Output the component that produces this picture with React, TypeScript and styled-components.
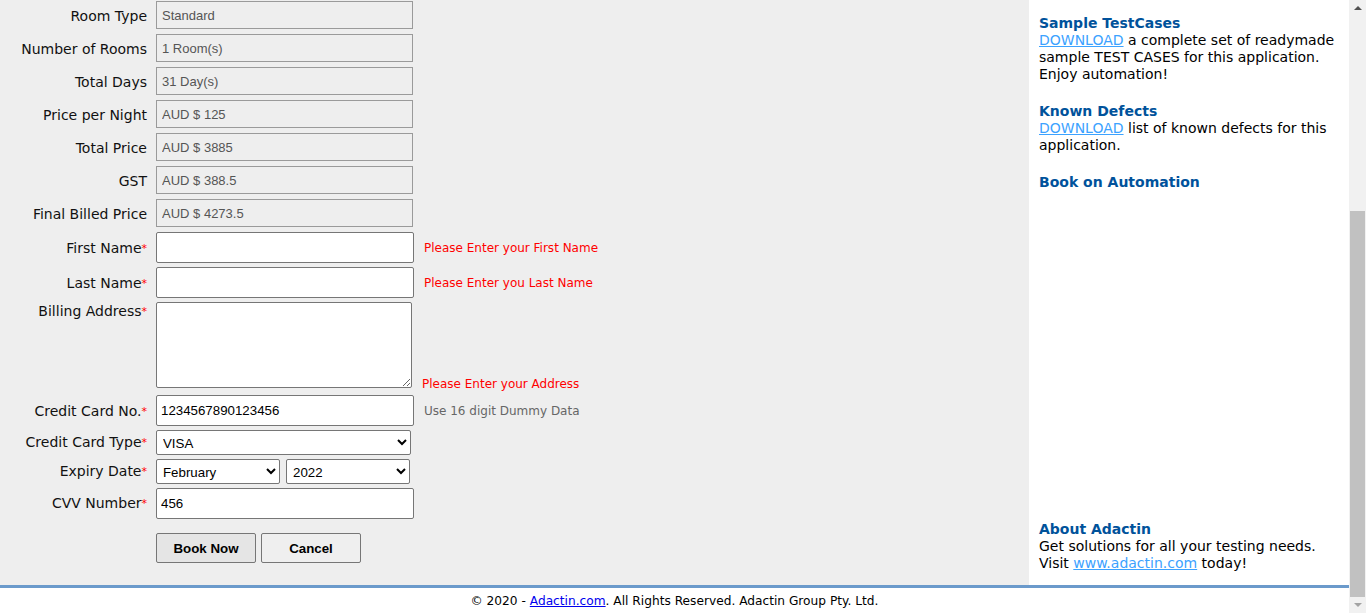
import * as React from "react"
import styled, { createGlobalStyle } from "styled-components"

const GlobalStyle = createGlobalStyle`
  html, body {
    margin: 0;
    padding: 0;
    overflow: hidden;
    background: #ffffff;
  }
  body {
    font-family: "DejaVu Sans", Verdana, sans-serif;
  }
`

const readonlyRows = [
  { label: "Room Type", value: "Standard" },
  { label: "Number of Rooms", value: "1 Room(s)" },
  { label: "Total Days", value: "31 Day(s)" },
  { label: "Price per Night", value: "AUD $ 125" },
  { label: "Total Price", value: "AUD $ 3885" },
  { label: "GST", value: "AUD $ 388.5" },
  { label: "Final Billed Price", value: "AUD $ 4273.5" },
]

const months = ["January", "February", "March", "April", "May", "June", "July", "August", "September", "October", "November", "December"]

export default function App() {
  return (
    <Page>
      <GlobalStyle />
      <Viewport>
        <Main>
          <Content>
            <FormArea>
              <Form>
                {readonlyRows.map(r => (
                  <Row key={r.label} $height={33}>
                    <Label $line={30}>{r.label}</Label>
                    <ReadonlyInput readOnly value={r.value} />
                  </Row>
                ))}
                <Row $height={35}>
                  <Label $line={32}>
                    First Name<Star>*</Star>
                  </Label>
                  <TextInput defaultValue="" />
                  <Message>Please Enter your First Name</Message>
                </Row>
                <Row $height={35}>
                  <Label $line={32}>
                    Last Name<Star>*</Star>
                  </Label>
                  <TextInput defaultValue="" />
                  <Message>Please Enter you Last Name</Message>
                </Row>
                <AddressRow>
                  <Label $line={18}>
                    Billing Address<Star>*</Star>
                  </Label>
                  <Address />
                  <AddressMessage>Please Enter your Address</AddressMessage>
                </AddressRow>
                <Row $height={35}>
                  <Label $line={32}>
                    Credit Card No.<Star>*</Star>
                  </Label>
                  <TextInput defaultValue="1234567890123456" />
                  <Hint>Use 16 digit Dummy Data</Hint>
                </Row>
                <Row $height={29}>
                  <Label $line={25}>
                    Credit Card Type<Star>*</Star>
                  </Label>
                  <Select $width={255} defaultValue="VISA">
                    <option>VISA</option>
                    <option>AMEX</option>
                    <option>Master Card</option>
                  </Select>
                </Row>
                <Row $height={29}>
                  <Label $line={25}>
                    Expiry Date<Star>*</Star>
                  </Label>
                  <SelectPair>
                    <Select $width={124} defaultValue="February">
                      {months.map(m => (
                        <option key={m}>{m}</option>
                      ))}
                    </Select>
                    <Select $width={124} defaultValue="2022">
                      <option>2022</option>
                      <option>2023</option>
                    </Select>
                  </SelectPair>
                </Row>
                <Row $height={45}>
                  <Label $line={31}>
                    CVV Number<Star>*</Star>
                  </Label>
                  <TextInput defaultValue="456" />
                </Row>
                <Buttons>
                  <Button $primary>Book Now</Button>
                  <Button>Cancel</Button>
                </Buttons>
              </Form>
            </FormArea>
            <Sidebar>
              <Section>
                <Heading>Sample TestCases</Heading>
                <Text>
                  <SideLink href="#">DOWNLOAD</SideLink> a complete set of readymade sample TEST CASES for this
                  application. Enjoy automation!
                </Text>
              </Section>
              <Section>
                <Heading>Known Defects</Heading>
                <Text>
                  <SideLink href="#">DOWNLOAD</SideLink> list of known defects for this application.
                </Text>
              </Section>
              <Section>
                <Heading>Book on Automation</Heading>
              </Section>
              <BottomSection>
                <Heading>About Adactin</Heading>
                <Text>
                  Get solutions for all your testing needs.
                  <br />
                  Visit <SideLink href="#">www.adactin.com</SideLink> today!
                </Text>
              </BottomSection>
            </Sidebar>
          </Content>
          <Footer>
            © 2020 - <FooterLink href="#">Adactin.com</FooterLink>. All Rights Reserved. Adactin Group Pty. Ltd.
          </Footer>
        </Main>
        <Scrollbar>
          <ArrowUp />
          <Track>
            <Thumb />
          </Track>
          <ArrowDown />
        </Scrollbar>
      </Viewport>
    </Page>
  )
}

const Page = styled.div`
  width: 1366px;
  height: 613px;
  overflow: hidden;
`

const Viewport = styled.div`
  display: flex;
  height: 613px;
`

const Main = styled.div`
  flex: 1;
  display: flex;
  flex-direction: column;
`

const Content = styled.div`
  display: flex;
  height: 585px;
  background: #eeeeee;
  border-bottom: 3px solid #6b9acb;
`

const FormArea = styled.div`
  width: 1029px;
  padding-top: 1px;
`

const Form = styled.div`
  display: flex;
  flex-direction: column;
`

const Row = styled.div<{ $height: number }>`
  display: flex;
  align-items: flex-start;
  height: ${p => p.$height}px;
`

const AddressRow = styled.div`
  display: flex;
  align-items: flex-start;
  height: 93px;
`

const Label = styled.div<{ $line?: number }>`
  width: 147px;
  margin-right: 9px;
  text-align: right;
  font-family: "DejaVu Sans", Verdana, sans-serif;
  font-size: 14px;
  color: #111111;
  line-height: ${p => p.$line ?? 29}px;
  white-space: nowrap;
`

const Star = styled.span`
  color: #ff0000;
  font-size: 11px;
  vertical-align: 1px;
`

const ReadonlyInput = styled.input`
  box-sizing: border-box;
  width: 257px;
  height: 28px;
  margin: 0;
  padding: 0 5px;
  border: 1px solid #9a9a9a;
  background: #eeeeee;
  color: #555555;
  font-family: "Liberation Sans", Arial, sans-serif;
  font-size: 13px;
  outline: none;
`

const TextInput = styled.input`
  box-sizing: border-box;
  width: 258px;
  height: 31px;
  margin: 0;
  padding: 0 4px;
  border: 1px solid #767676;
  border-radius: 2px;
  background: #ffffff;
  color: #000000;
  font-family: "Liberation Sans", Arial, sans-serif;
  font-size: 13.3px;
  outline: none;
`

const Address = styled.textarea`
  box-sizing: border-box;
  width: 256px;
  height: 86px;
  margin: 0;
  border: 1px solid #767676;
  border-radius: 2px;
  background: #ffffff;
  resize: both;
  outline: none;
`

const Message = styled.div`
  margin-left: 10px;
  line-height: 32px;
  font-family: "DejaVu Sans", Verdana, sans-serif;
  font-size: 12px;
  color: #ff0000;
`

const AddressMessage = styled(Message)`
  margin-left: 10px;
  align-self: flex-end;
  line-height: 16px;
  margin-bottom: 3px;
`

const Hint = styled(Message)`
  color: #666666;
`

const Select = styled.select<{ $width: number }>`
  box-sizing: border-box;
  width: ${p => p.$width}px;
  height: 25px;
  margin: 0;
  padding: 1px 2px 0;
  border: 1px solid #767676;
  border-radius: 2px;
  background: #ffffff;
  color: #000000;
  font-family: "Liberation Sans", Arial, sans-serif;
  font-size: 13.3px;
`

const SelectPair = styled.div`
  display: flex;
  gap: 6px;
`

const Buttons = styled.div`
  display: flex;
  gap: 5px;
  padding-left: 156px;
`

const Button = styled.button<{ $primary?: boolean }>`
  box-sizing: border-box;
  width: 100px;
  height: 30px;
  border: 1px solid #767676;
  border-radius: 2px;
  background: ${p => (p.$primary ? "#e5e5e5" : "#efefef")};
  color: #000000;
  font-family: "Liberation Sans", Arial, sans-serif;
  font-size: 13.3px;
  font-weight: bold;
`

const Sidebar = styled.div`
  width: 300px;
  padding: 15px 10px 0;
  background: #ffffff;
  display: flex;
  flex-direction: column;
  font-family: "DejaVu Sans", Verdana, sans-serif;
  font-size: 14px;
  line-height: 17px;
  color: #000000;
`

const Section = styled.div`
  margin-bottom: 20px;
`

const BottomSection = styled.div`
  margin-top: auto;
  margin-bottom: 13px;
`

const Heading = styled.div`
  font-weight: bold;
  color: #00529b;
  font-size: 14px;
`

const Text = styled.div``

const SideLink = styled.a`
  color: #3ca2ff;
  text-decoration: underline;
`

const Footer = styled.div`
  flex: 1;
  box-sizing: border-box;
  padding-top: 1px;
  background: #ffffff;
  text-align: center;
  font-family: "DejaVu Sans", Verdana, sans-serif;
  font-size: 12.2px;
  line-height: 24px;
  color: #000000;
`

const FooterLink = styled.a`
  color: #0000ee;
  text-decoration: underline;
`

const Scrollbar = styled.div`
  width: 17px;
  background: #f1f1f1;
  display: flex;
  flex-direction: column;
  align-items: center;
`

const ArrowUp = styled.div`
  margin: 6px 0;
  width: 0;
  height: 0;
  border-left: 4px solid transparent;
  border-right: 4px solid transparent;
  border-bottom: 4px solid #505050;
`

const ArrowDown = styled.div`
  margin: 6px 0;
  width: 0;
  height: 0;
  border-left: 4px solid transparent;
  border-right: 4px solid transparent;
  border-top: 4px solid #a3a3a3;
`

const Track = styled.div`
  flex: 1;
  width: 100%;
  display: flex;
  flex-direction: column;
  justify-content: flex-end;
  align-items: center;
`

const Thumb = styled.div`
  width: 15px;
  height: 386px;
  background: #c1c1c1;
`
